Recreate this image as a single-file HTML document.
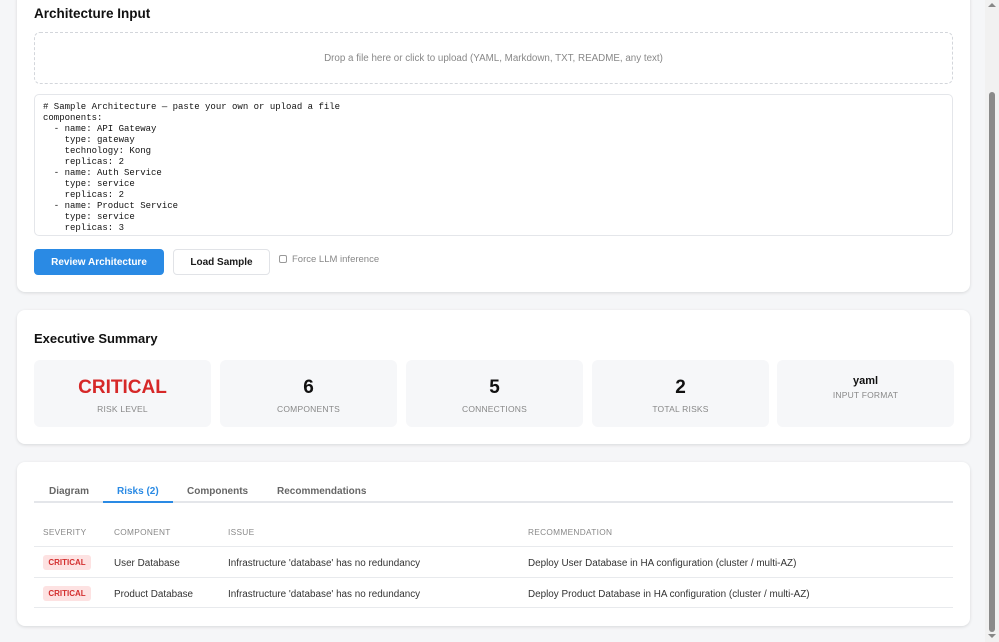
<!DOCTYPE html>
<html><head><meta charset="utf-8"><style>
*{box-sizing:border-box;margin:0;padding:0}
body{width:999px;height:642px;overflow:hidden;background:#f5f6f8;font-family:"Liberation Sans",sans-serif;color:#1a1a1a;position:relative}
.card{position:absolute;left:17px;width:953px;background:#fff;border-radius:8px;box-shadow:0 1px 3px rgba(0,0,0,.12)}
h2{position:absolute;left:17px;font-size:13px;font-weight:bold;color:#111}
.drop{position:absolute;left:17px;top:32px;width:919px;height:52px;border:1.5px dashed #d3d6db;border-radius:6px;text-align:center;line-height:52px;font-size:9.8px;color:#888}
.ta{position:absolute;left:17px;top:94px;width:919px;height:142px;border:1px solid #e4e6ea;border-radius:5px;overflow:hidden;padding:7px 8px;font-family:"Liberation Mono",monospace;font-size:9px;line-height:11px;white-space:pre;color:#111}
.btn1{position:absolute;left:17px;top:249px;width:130px;height:26px;background:#2a8ae4;border-radius:4px;color:#fff;font-size:10px;font-weight:bold;text-align:center;line-height:27px}
.btn2{position:absolute;left:156px;top:249px;width:97px;height:26px;border:1px solid #e1e3e7;border-radius:4px;font-size:10px;font-weight:bold;text-align:center;line-height:26px}
.chk{position:absolute;left:262px;top:254px;font-size:9.5px;color:#888}
.chk i{display:inline-block;width:8px;height:8px;border:1px solid #999;border-radius:2px;margin-right:5px;vertical-align:-1px}
.stat{position:absolute;top:50px;width:177px;height:67px;background:#f6f7f9;border-radius:6px;text-align:center}
.stat b{display:block;font-size:19px;margin-top:17px;color:#111}
.stat span{display:block;font-size:8.5px;color:#888;margin-top:5px;letter-spacing:.2px}
.tabs{position:absolute;left:17px;top:20px;width:919px;height:21px;border-bottom:2px solid #e4e6ea;font-size:10px;font-weight:bold;color:#666}
.tabs div{position:absolute;top:4px}
.th{position:absolute;top:66px;font-size:8.3px;color:#888;letter-spacing:.3px}
.line{position:absolute;left:17px;width:919px;height:1px;background:#e8eaed}
.td{position:absolute;font-size:9.9px;color:#333}
.badge{position:absolute;left:26px;width:48px;height:15px;background:#fde2e2;color:#d32f2f;font-size:8px;font-weight:bold;border-radius:3px;text-align:center;line-height:15px}
.sb{position:absolute;right:0;top:0;width:14px;height:642px;background:#f1f1f1}
</style></head><body>
<div class="card" style="top:-10px;height:302px">
<h2 style="top:16px;font-size:13.5px">Architecture Input</h2>
<div class="drop" style="top:42px">Drop a file here or click to upload (YAML, Markdown, TXT, README, any text)</div>
<div class="ta" style="top:104px"># Sample Architecture — paste your own or upload a file
components:
  - name: API Gateway
    type: gateway
    technology: Kong
    replicas: 2
  - name: Auth Service
    type: service
    replicas: 2
  - name: Product Service
    type: service
    replicas: 3</div>
<div class="btn1" style="top:259px">Review Architecture</div>
<div class="btn2" style="top:259px">Load Sample</div>
<div class="chk" style="top:264px"><i></i>Force LLM inference</div>
</div>
<div class="card" style="top:310px;height:134px">
<h2 style="top:21px">Executive Summary</h2>
<div class="stat" style="left:17px"><b style="color:#d62828">CRITICAL</b><span>RISK LEVEL</span></div>
<div class="stat" style="left:203px"><b>6</b><span>COMPONENTS</span></div>
<div class="stat" style="left:389px"><b>5</b><span>CONNECTIONS</span></div>
<div class="stat" style="left:575px"><b>2</b><span>TOTAL RISKS</span></div>
<div class="stat" style="left:760px"><b style="font-size:11px;margin-top:15px">yaml</b><span style="margin-top:3px">INPUT FORMAT</span></div>
</div>
<div class="card" style="top:462px;height:164px">
<div class="tabs"><div style="left:15px">Diagram</div><div style="left:83px;color:#2a8ae4">Risks (2)</div><div style="left:153px">Components</div><div style="left:243px">Recommendations</div>
<div style="left:69px;top:19px;width:70px;height:2px;background:#2a8ae4"></div></div>
<div class="th" style="left:26px;top:65px">SEVERITY</div><div class="th" style="left:97px;top:65px">COMPONENT</div><div class="th" style="left:211px;top:65px">ISSUE</div><div class="th" style="left:511px;top:65px">RECOMMENDATION</div>
<div class="line" style="top:84px"></div>
<div class="badge" style="top:93px">CRITICAL</div><div class="td" style="left:97px;top:96px">User Database</div><div class="td" style="left:211px;top:96px">Infrastructure 'database' has no redundancy</div><div class="td" style="left:511px;top:96px">Deploy User Database in HA configuration (cluster / multi-AZ)</div>
<div class="line" style="top:115px"></div>
<div class="badge" style="top:124px">CRITICAL</div><div class="td" style="left:97px;top:127px">Product Database</div><div class="td" style="left:211px;top:127px">Infrastructure 'database' has no redundancy</div><div class="td" style="left:511px;top:127px">Deploy Product Database in HA configuration (cluster / multi-AZ)</div>
<div class="line" style="top:145px"></div>
</div>
<div class="sb"><div style="position:absolute;left:4px;top:92px;width:6px;height:540px;background:#8a8a8a;border-radius:3px"></div>
<div style="position:absolute;left:3px;top:3px;border:4px solid transparent;border-bottom:4px solid #888;border-top:0"></div>
<div style="position:absolute;left:3px;top:634px;border:4px solid transparent;border-top:4px solid #888;border-bottom:0"></div></div>
</body></html>
